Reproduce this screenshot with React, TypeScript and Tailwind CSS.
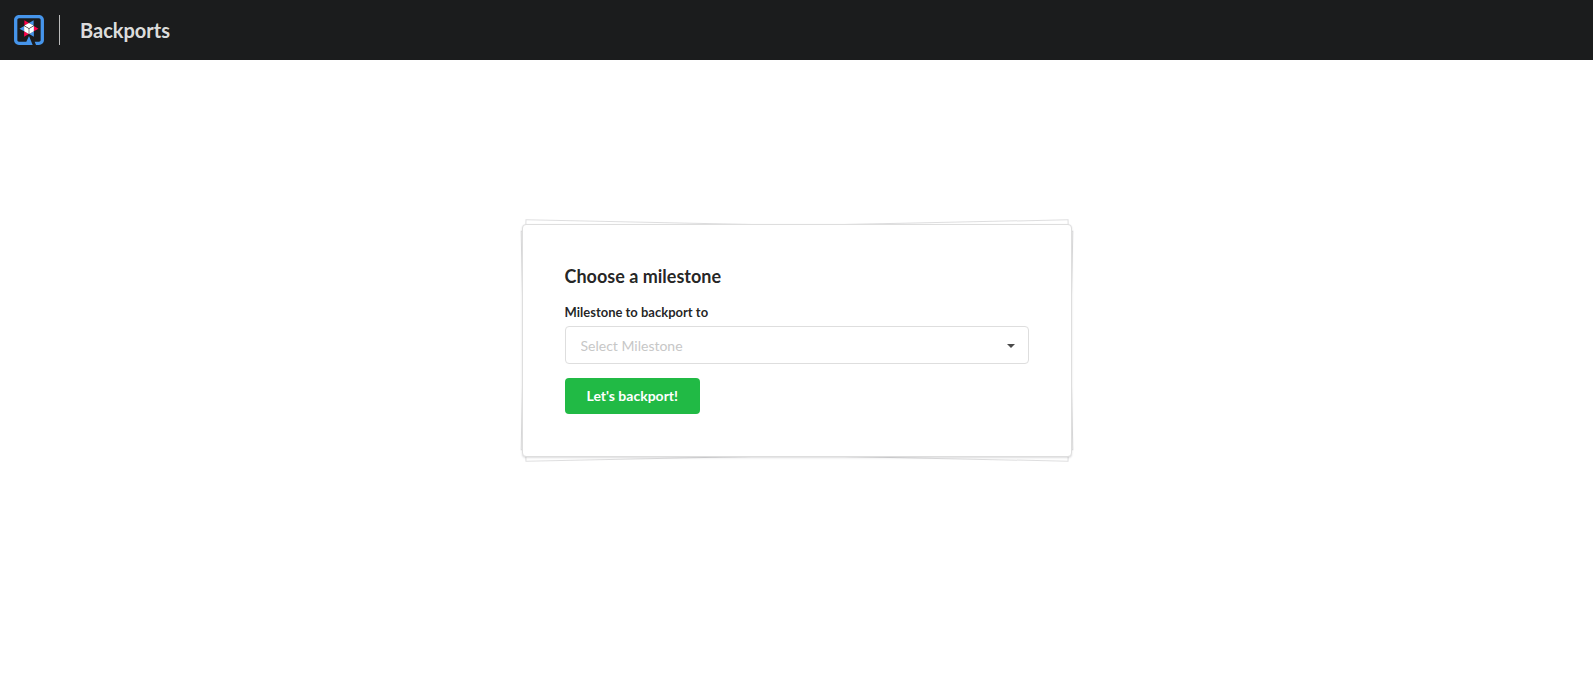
import { useState } from 'react';

function Logo() {
  return (
    <svg viewBox="0 0 1024 1024" className="size-[30px]" role="img" aria-label="Quarkus">
      <g fill="#4695eb">
        <polygon points="669.34 180.57 512 271.41 669.34 362.25" />
        <polygon points="188.76 467.93 346.1 558.76 346.1 377.07" />
        <polygon points="677.9 740.44 677.9 558.76 520.57 649.6" />
        <path d="M853.47,1H170.53C77.29,1,1,77.29,1,170.53V853.47C1,946.71,77.29,1023,170.53,1023h467.7L512,716.39,420.42,910H170.53C139.9,910,114,884.1,114,853.47V170.53C114,139.9,139.9,114,170.53,114H853.47C884.1,114,910,139.9,910,170.53V853.47C910,884.1,884.1,910,853.47,910H705.28l46.52,113H853.47c93.24,0,169.53-76.29,169.53-169.53V170.53C1023,77.29,946.71,1,853.47,1Z" />
      </g>
      <g fill="#ff004a">
        <polygon points="354.66 180.57 354.66 362.25 512 271.41" />
        <polygon points="346.1 740.44 503.43 649.6 346.1 558.76" />
        <polygon points="835.24 467.93 677.9 377.07 677.9 558.76" />
      </g>
      <g fill="#ffffff">
        <polygon points="669.34 362.25 512 271.41 354.66 362.25 512 453.09" />
        <polygon points="346.1 377.07 346.1 558.76 503.43 649.6 503.43 467.93" />
        <polygon points="520.57 649.6 677.9 558.76 677.9 377.07 520.57 467.93" />
      </g>
    </svg>
  );
}

function Header() {
  return (
    <header className="flex h-15 items-center bg-[#1b1c1d] px-3.5">
      <Logo />
      <div className="ml-[15px] flex h-[30px] items-center border-l border-white/70 pl-5">
        <h1 className="text-xl font-bold text-white/87">Backports</h1>
      </div>
    </header>
  );
}

function MilestoneForm() {
  const [milestone, setMilestone] = useState('');
  return (
    <form
      onSubmit={(e) => e.preventDefault()}
      className="flex flex-col items-start rounded-[4px] border border-[#dedede] bg-white px-[42px] pt-[39px] pb-[42px] shadow-[0_1px_2px_0_rgba(34,36,38,0.15)]"
    >
      <h2 className="text-lg leading-6 font-bold">Choose a milestone</h2>
      <label htmlFor="milestone" className="mt-3.5 mb-1 text-[13px] leading-5 font-bold">
        Milestone to backport to
      </label>
      <div className="relative w-full">
        <select
          id="milestone"
          value={milestone}
          onChange={(e) => setMilestone(e.target.value)}
          className="block h-[38px] w-full appearance-none rounded-[4px] border border-[#dedede] bg-white px-[15px] pt-0.5 text-sm text-[#c7c7c7]"
        >
          <option value="">Select Milestone</option>
        </select>
        <svg
          viewBox="0 0 8 4"
          className="pointer-events-none absolute top-[18px] right-3.5 h-1 w-2"
          fill="#4a4a4a"
          aria-hidden="true"
        >
          <path d="M0 0H8L4 4Z" />
        </svg>
      </div>
      <button
        type="submit"
        className="mt-3.5 h-9 rounded-[4px] bg-[#21ba45] px-[22px] text-sm font-bold text-white"
      >
        Let's backport!
      </button>
    </form>
  );
}

export default function App() {
  return (
    <div className="min-h-screen bg-white font-['Lato','Liberation_Sans',sans-serif] text-black/87">
      <Header />
      <main className="flex justify-center px-4 pt-[164px]">
        <div className="relative isolate w-full max-w-[550px]">
          <div className="absolute inset-px -z-10 -rotate-[1.2deg] border border-[#222426]/15 bg-white" />
          <div className="absolute inset-px -z-10 rotate-[1.2deg] border border-[#222426]/15 bg-white" />
          <MilestoneForm />
        </div>
      </main>
    </div>
  );
}
